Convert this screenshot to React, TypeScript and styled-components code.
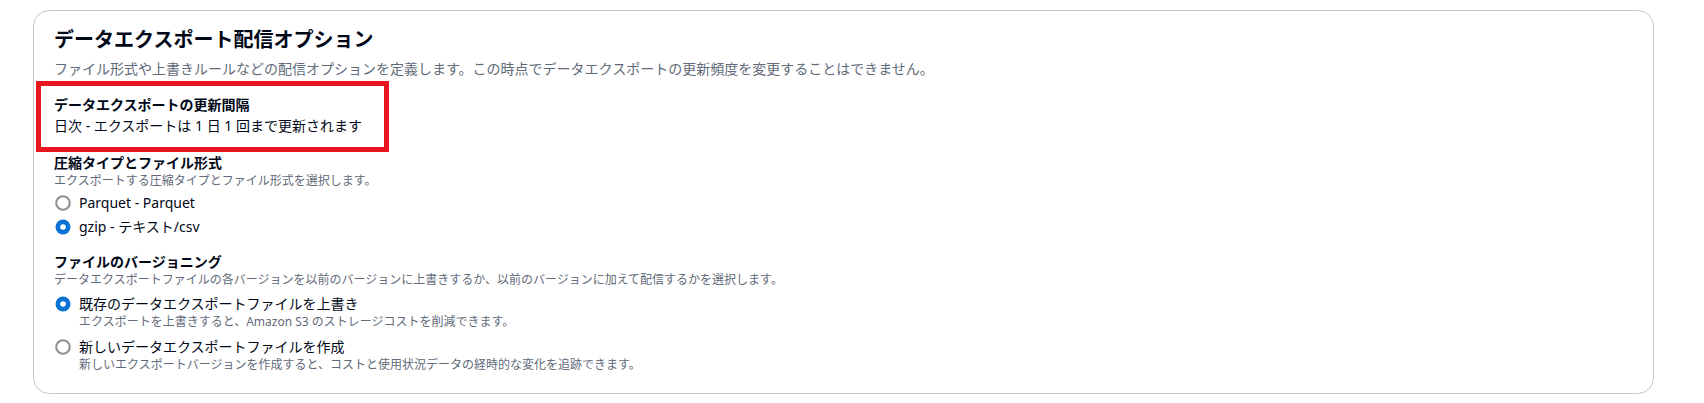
import styled, { createGlobalStyle } from 'styled-components';

const GlobalStyle = createGlobalStyle`
  body {
    margin: 0;
    background: #ffffff;
    font-family: "Noto Sans", "Noto Sans CJK JP", sans-serif;
    color: #000716;
  }
`;

type Option = {
  id: string;
  label: string;
  hint?: string;
  checked: boolean;
};

const formatOptions: Option[] = [
  { id: 'parquet', label: 'Parquet - Parquet', checked: false },
  { id: 'gzip', label: 'gzip - テキスト/csv', checked: true },
];

const versionOptions: Option[] = [
  {
    id: 'overwrite',
    label: '既存のデータエクスポートファイルを上書き',
    hint: 'エクスポートを上書きすると、Amazon S3 のストレージコストを削減できます。',
    checked: true,
  },
  {
    id: 'create',
    label: '新しいデータエクスポートファイルを作成',
    hint: '新しいエクスポートバージョンを作成すると、コストと使用状況データの経時的な変化を追跡できます。',
    checked: false,
  },
];

const RadioIcon = ({ checked }: { checked: boolean }) =>
  checked ? (
    <svg width="16" height="16" viewBox="0 0 16 16">
      <circle cx="8" cy="8" r="7.5" fill="#0972d3" />
      <circle cx="8" cy="8" r="2.8" fill="#ffffff" />
    </svg>
  ) : (
    <svg width="16" height="16" viewBox="0 0 16 16">
      <circle cx="8" cy="8" r="6.8" fill="#ffffff" stroke="#8c8c94" strokeWidth="2" />
    </svg>
  );

const RadioList = ({ options, spacing, top }: { options: Option[]; spacing: number; top: number }) => (
  <Radios $gap={spacing} $top={top}>
    {options.map((opt) => (
      <RadioRow key={opt.id}>
        <RadioMark>
          <RadioIcon checked={opt.checked} />
        </RadioMark>
        <RadioText>
          <RadioLabel>{opt.label}</RadioLabel>
          {opt.hint && <Hint>{opt.hint}</Hint>}
        </RadioText>
      </RadioRow>
    ))}
  </Radios>
);

const App = () => {
  return (
    <Page>
      <GlobalStyle />
      <Card>
        <Title>データエクスポート配信オプション</Title>
        <Description>
          ファイル形式や上書きルールなどの配信オプションを定義します。この時点でデータエクスポートの更新頻度を変更することはできません。
        </Description>

        <Highlight>
          <Label>データエクスポートの更新間隔</Label>
          <Value>日次 - エクスポートは 1 日 1 回まで更新されます</Value>
        </Highlight>

        <Field $top={1}>
          <Label>圧縮タイプとファイル形式</Label>
          <Hint>エクスポートする圧縮タイプとファイル形式を選択します。</Hint>
          <RadioList options={formatOptions} spacing={4} top={4} />
        </Field>

        <Field $top={15}>
          <Label>ファイルのバージョニング</Label>
          <Hint>データエクスポートファイルの各バージョンを以前のバージョンに上書きするか、以前のバージョンに加えて配信するかを選択します。</Hint>
          <RadioList options={versionOptions} spacing={7} top={6} />
        </Field>
      </Card>
    </Page>
  );
};

export default App;

const Page = styled.div`
  padding: 10px 50px 10px 33px;
`;

const Card = styled.section`
  border: 1px solid #c6c6cd;
  border-radius: 16px;
  padding: 17px 20px 20px;
  background: #ffffff;
`;

const Title = styled.h2`
  margin: 0;
  font-size: 20px;
  line-height: 24px;
  font-weight: 700;
  color: #000716;
`;

const Description = styled.p`
  margin: 7px 0 0;
  font-size: 14px;
  line-height: 20px;
  color: #5f6b7a;
`;

const Highlight = styled.div`
  box-sizing: border-box;
  width: 353px;
  margin: 2px 0 0 -18px;
  padding: 9px 13px 11px;
  border: 5px solid #e8141e;
`;

const Field = styled.div<{ $top: number }>`
  margin-top: ${(p) => p.$top}px;
`;

const Label = styled.div`
  font-size: 14px;
  line-height: 20px;
  font-weight: 700;
  color: #000716;
`;

const Value = styled.div`
  margin-top: 1px;
  font-size: 14px;
  line-height: 20px;
  color: #000716;
`;

const Hint = styled.div`
  font-size: 12px;
  line-height: 16px;
  color: #5f6b7a;
`;

const Radios = styled.div<{ $gap: number; $top: number }>`
  display: flex;
  flex-direction: column;
  gap: ${(p) => p.$gap}px;
  margin-top: ${(p) => p.$top}px;
`;

const RadioRow = styled.div`
  display: flex;
  align-items: flex-start;
  gap: 8px;
  padding-left: 1px;
`;

const RadioMark = styled.span`
  display: flex;
  width: 16px;
  height: 16px;
  margin-top: 2px;
  flex-shrink: 0;
`;

const RadioText = styled.div`
  display: flex;
  flex-direction: column;
`;

const RadioLabel = styled.div`
  font-size: 14px;
  line-height: 20px;
  color: #000716;
`;
